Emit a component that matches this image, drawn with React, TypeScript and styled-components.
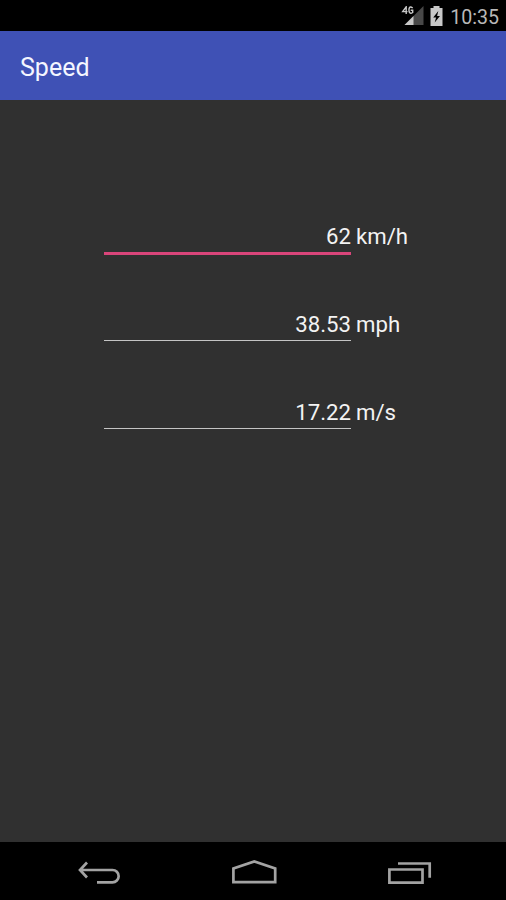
import React from "react";
import styled, { createGlobalStyle } from "styled-components";

const GlobalStyle = createGlobalStyle`
  body {
    margin: 0;
    background: #303030;
    font-family: Roboto, "Noto Sans", sans-serif;
  }
`;

const Screen = styled.div`
  display: flex;
  flex-direction: column;
  width: 506px;
  height: 900px;
  overflow: hidden;
  background: #303030;
`;

const StatusBar = styled.header`
  display: flex;
  flex: none;
  align-items: center;
  justify-content: flex-end;
  height: 31px;
  padding-right: 7px;
  box-sizing: border-box;
  background: #000;
`;

const SignalIcon = styled.svg`
  width: 23px;
  height: 20px;
  margin-right: 5px;
`;

const BatteryIcon = styled.svg`
  width: 14px;
  height: 20px;
  margin-right: 7px;
`;

const Clock = styled.span`
  color: #b8b8b8;
  font-size: 19.6px;
  line-height: 29px;
  padding-top: 4px;
`;

const AppBar = styled.div`
  display: flex;
  flex: none;
  align-items: center;
  height: 69px;
  padding: 4px 20px 0;
  box-sizing: border-box;
  background: #3f51b5;
`;

const Title = styled.h1`
  margin: 0;
  color: #f4f6ff;
  font-size: 25px;
  font-weight: 400;
  line-height: 30px;
`;

const Content = styled.main`
  flex: 1;
  padding: 120px 0 0 104px;
`;

const Row = styled.div`
  display: flex;
  align-items: flex-start;
  gap: 5px;
  height: 88px;
  color: #f3f3f3;
  font-size: 22.2px;
  line-height: 32px;
`;

const Field = styled.div<{ $focused?: boolean }>`
  width: 247px;
  height: 32px;
  text-align: right;
  border-bottom: ${(p) => (p.$focused ? "3px solid #d9457a" : "1px solid #c4c4c4")};
`;

const Unit = styled.span``;

const NavBar = styled.nav`
  display: flex;
  flex: none;
  align-items: center;
  justify-content: space-between;
  height: 58px;
  padding: 3px 73px 0 77px;
  box-sizing: border-box;
  background: #000;
`;

const NavIcon = styled.svg`
  width: 46px;
  height: 26px;
  fill: none;
  stroke: #a3a3a3;
  stroke-width: 2.7;
`;

const readings = [
  { value: "62", unit: "km/h", focused: true },
  { value: "38.53", unit: "mph", focused: false },
  { value: "17.22", unit: "m/s", focused: false },
];

export default function App() {
  return (
    <>
      <GlobalStyle />
      <Screen>
        <StatusBar>
          <SignalIcon viewBox="0 0 23 20">
            <path d="M22.5 0V19H3.5Z" fill="#484848" />
            <path d="M12.5 10V19H3.5Z" fill="#c8c8c8" />
            <path d="M5 0L1 6H6.2M4.5 .5V8V8M11 2Q8 -.5 7.3 3V5Q8 8.5 11 6.5V4H9" fill="none" stroke="#000" strokeWidth="3" />
            <path d="M5.2 8V.8L1.7 5.6H6.5M11.7 2Q8.7 -.5 8 3V5Q8.7 8.5 11.7 6.5V4.2H9.7" fill="none" stroke="#c8c8c8" strokeWidth="1.4" />
          </SignalIcon>
          <BatteryIcon viewBox="0 0 14 20">
            <path d="M4.5 0H10.5V2H13.5V20H1.5V2H4.5Z" fill="#c8c8c8" />
            <path d="M9.3 5L4.2 11.4H7.1L5.7 16.5L11 9.9H8.1Z" fill="#000" />
          </BatteryIcon>
          <Clock>10:35</Clock>
        </StatusBar>
        <AppBar>
          <Title>Speed</Title>
        </AppBar>
        <Content>
          {readings.map((r) => (
            <Row key={r.unit}>
              <Field $focused={r.focused}>{r.value}</Field>
              <Unit>{r.unit}</Unit>
            </Row>
          ))}
        </Content>
        <NavBar>
          <NavIcon viewBox="0 0 46 26">
            <path d="M10 2.5L3 10L10 17.5M3 10H35.5A6 6 0 0 1 35.5 22.3H20" />
          </NavIcon>
          <NavIcon viewBox="-0.5 0 46 26">
            <path d="M0.9 22.2V8.5L21.8 1.5L42.7 8.5V22.2Z" />
          </NavIcon>
          <NavIcon viewBox="0 0 46 26">
            <path d="M2.4 9.5H35.5V22.7H2.4ZM11 3.5H42.7V17.8" />
          </NavIcon>
        </NavBar>
      </Screen>
    </>
  );
}
